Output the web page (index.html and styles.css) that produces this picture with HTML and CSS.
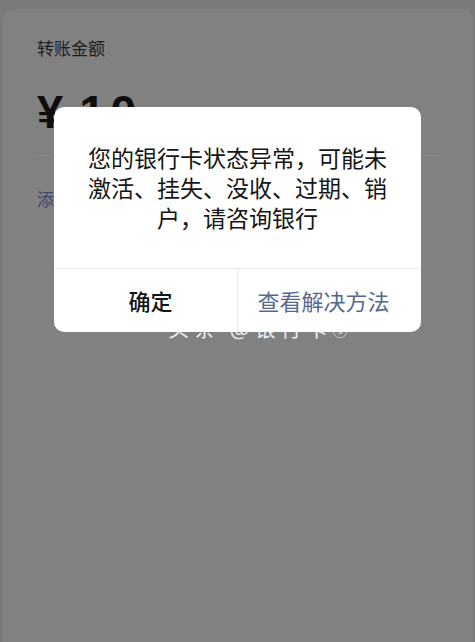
FILE: index.html
```html
<!DOCTYPE html>
<html lang="zh-CN">
<head>
<meta charset="utf-8">
<title>转账</title>
<link rel="stylesheet" href="styles.css">
</head>
<body>
<div class="page">
  <div class="card">
    <div class="label">转账金额</div>
    <div class="amount"><span class="yen">¥</span><span class="num">10</span></div>
    <div class="divider"></div>
    <div class="link">添加转账说明</div>
    <div class="watermark">头条 @银行卡<span class="mark">ⓢ</span></div>
  </div>
  <div class="dialog">
    <div class="message">您的银行卡状态异常，可能未<br>激活、挂失、没收、过期、销<br>户，请咨询银行</div>
    <div class="actions">
      <div class="btn btn-ok">确定</div>
      <div class="btn btn-link">查看解决方法</div>
    </div>
  </div>
</div>
</body>
</html>
```

FILE: styles.css
```css
html, body {
  margin: 0;
  padding: 0;
  height: 100%;
}
body {
  background: #7a7a7a;
  font-family: "Noto Sans CJK SC", "Noto Sans", sans-serif;
  overflow: hidden;
}
.page {
  position: relative;
  height: 642px;
  padding-top: 9px;
  box-sizing: border-box;
}
.card {
  position: relative;
  height: 100%;
  margin: 0 2px;
  background: #818181;
  border-radius: 13px 13px 0 0;
  padding: 26px 35px 0 35px;
  box-sizing: border-box;
}
.label {
  font-size: 17px;
  line-height: 26px;
  color: #1e1e1e;
}
.amount {
  margin-top: 23px;
  height: 56px;
  font-family: "Liberation Sans", Arial, sans-serif;
  font-weight: bold;
  font-size: 47px;
  line-height: 56px;
  color: #0e0e0e;
  display: flex;
  gap: 16px;
}
.num {
  letter-spacing: 5px;
}
.divider {
  margin-top: 15px;
  height: 1px;
  background: #8b8b8b;
}
.link {
  margin-top: 31px;
  font-size: 17px;
  line-height: 24px;
  color: #3e4866;
}
.watermark {
  position: absolute;
  left: 166px;
  top: 307px;
  font-size: 21px;
  line-height: 22px;
  color: #eeeeee;
  letter-spacing: 5px;
}
.mark {
  font-size: 15px;
}
.dialog {
  position: absolute;
  left: 54px;
  top: 107px;
  width: 367px;
  height: 225px;
  background: #ffffff;
  border-radius: 10px;
  display: flex;
  flex-direction: column;
  overflow: hidden;
}
.message {
  padding: 35px 10px 0 10px;
  height: 126px;
  box-sizing: border-box;
  text-align: center;
  font-size: 23px;
  line-height: 30px;
  color: #151515;
  white-space: nowrap;
}
.actions {
  margin-top: 35px;
  flex: 1;
  display: grid;
  grid-template-columns: 184px 1fr;
  border-top: 1px solid #ededed;
}
.btn {
  display: flex;
  align-items: center;
  justify-content: center;
  font-size: 22px;
  padding-bottom: 2px;
}
.btn-ok {
  color: #141414;
  font-weight: 500;
  padding-left: 10px;
  border-right: 1px solid #ededed;
}
.btn-link {
  color: #55698f;
  padding-right: 12px;
}
```
